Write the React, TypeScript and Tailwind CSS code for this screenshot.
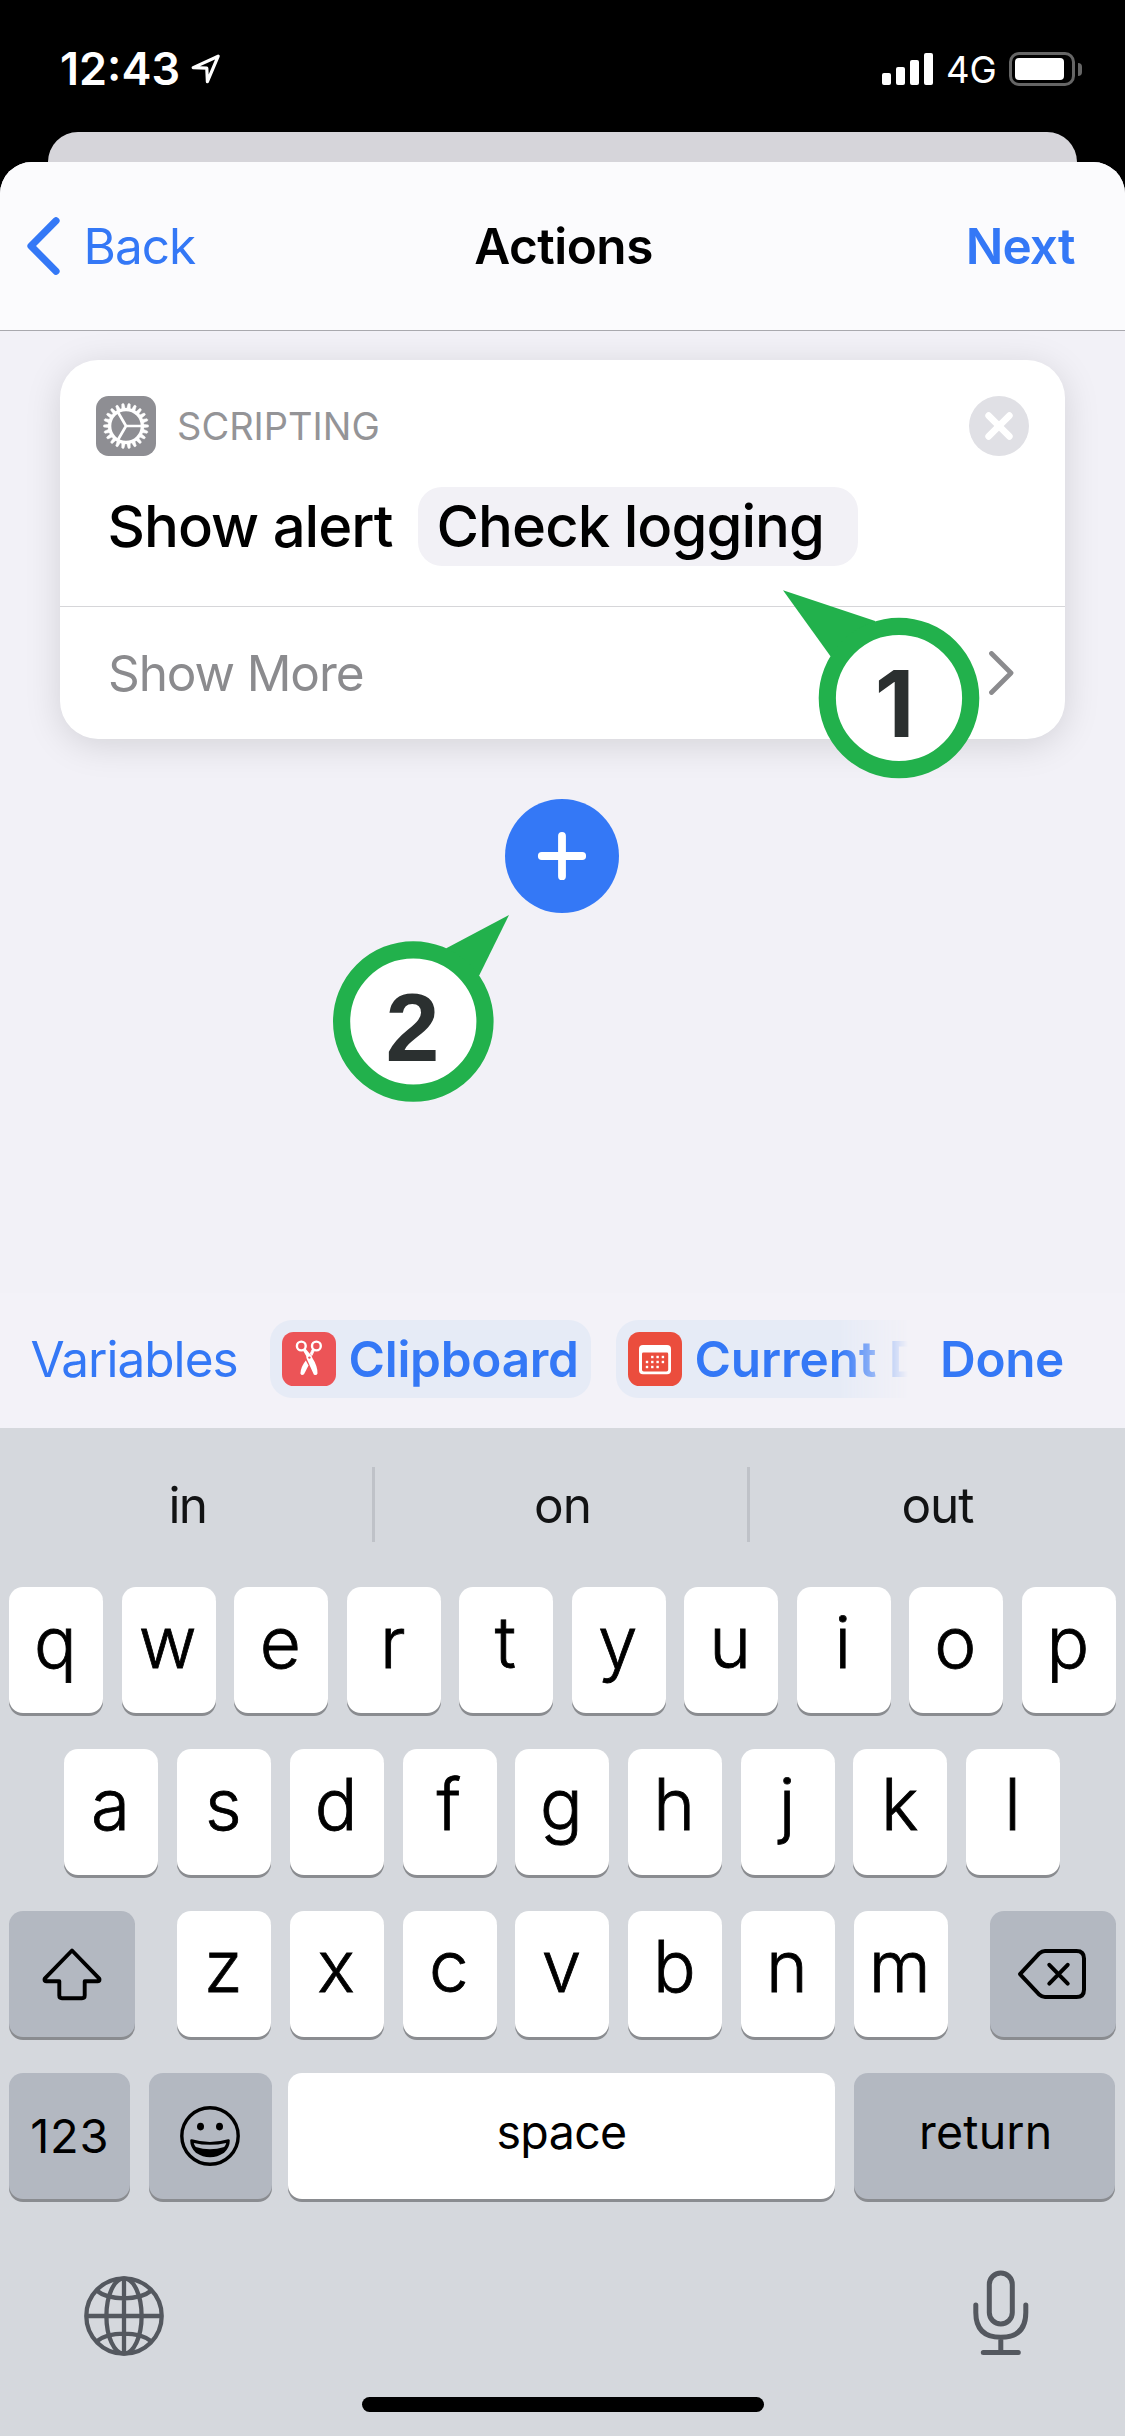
import React from "react";

function StatusBar() {
  return (
    <div className="flex h-[132px] items-center justify-between pb-0 pt-[6px] text-white">
      <div className="flex items-center pl-[60px]">
        <span className="text-[45px] font-semibold leading-[54px]">12:43</span>
        <svg className="ml-[10px] h-[32px] w-[32px]" viewBox="0 0 32 32" fill="none">
          <path d="M28.2 3.2 3.2 14.6 16.8 15.2 17.4 28.6Z" stroke="#fff" strokeWidth="3.2" strokeLinejoin="round" />
        </svg>
      </div>
      <div className="flex items-center pr-[43px]">
        <div className="flex h-[32px] items-end gap-[5px]">
          <div className="h-[12px] w-[9px] rounded-[2px] bg-white" />
          <div className="h-[18px] w-[9px] rounded-[2px] bg-white" />
          <div className="h-[25px] w-[9px] rounded-[2px] bg-white" />
          <div className="h-[32px] w-[9px] rounded-[2px] bg-white" />
        </div>
        <span className="ml-[13px] w-[63px] pt-[2px] text-[36.5px] leading-[42px]">4G</span>
        <div className="flex h-[34px] w-[66px] items-center rounded-[10px] border-3 border-[#666] pl-[3px]">
          <div className="h-[22px] w-[49px] rounded-[4px] bg-white" />
        </div>
        <div className="ml-[3px] h-[13px] w-[4px] rounded-r-full bg-[#666]" />
      </div>
    </div>
  );
}

function NavBar() {
  return (
    <div className="grid h-[169px] grid-cols-3 items-center rounded-t-[32px] border-b border-[#a9a9ae] bg-[#fbfbfd] text-[49.5px] leading-[60px]">
      <div className="flex items-center pl-[24.5px] text-[#3478f6]">
        <svg className="h-[58px] w-[36px]" viewBox="0 0 36 58" fill="none">
          <path d="M31 3.8 6 29 31 54.2" stroke="#3478f6" strokeWidth="7.2" strokeLinecap="round" strokeLinejoin="round" />
        </svg>
        <span className="ml-[23px] tracking-[-1px]">Back</span>
      </div>
      <div className="pl-[2px] text-center font-semibold tracking-[-0.5px]">Actions</div>
      <div className="pr-[50.5px] text-right font-semibold tracking-[-0.9px] text-[#3478f6]">Next</div>
    </div>
  );
}

const TEETH = Array.from({ length: 22 }, (_, i) => (i * 360) / 22);

function GearIcon() {
  return (
    <svg className="h-[60px] w-[60px]" viewBox="0 0 60 60" fill="none">
      <rect width="60" height="60" rx="12.5" fill="#8e8e93" />
      {TEETH.map((a) => (
        <path key={a} d="M47 28.2 52.2 28.9Q53.2 30 52.2 31.1L47 31.8Z" fill="#fff" stroke="#fff" strokeWidth="0.5" transform={`rotate(${a} 30 30)`} />
      ))}
      <circle cx="30" cy="30" r="16.4" stroke="#fff" strokeWidth="3.4" />
      <path d="M30 30H46M30 30 22 16.2M30 30 22 43.8" stroke="#fff" strokeWidth="2.7" />
    </svg>
  );
}

function ActionCard() {
  return (
    <div className="mx-[60px] mt-[29px] h-[379px] rounded-[38px] bg-white shadow-[0_6px_36px_rgba(0,0,0,0.13)]">
      <div className="flex flex-col pt-[36px]">
        <div className="flex h-[60px] items-center px-[36px]">
          <GearIcon />
          <span className="ml-[21px] flex-1 text-[38px] leading-[48px] text-[#949497]">SCRIPTING</span>
          <svg className="h-[60px] w-[60px]" viewBox="0 0 60 60" fill="none">
            <circle cx="30" cy="30" r="30" fill="#e0e0e5" />
            <path d="M19.6 19.6 40.4 40.4M40.4 19.6 19.6 40.4" stroke="#fff" strokeWidth="6.6" strokeLinecap="round" />
          </svg>
        </div>
        <div className="mt-[31px] flex h-[79px] items-center pl-[47.5px] text-[58px] font-medium leading-[79px] text-black">
          <span className="w-[310px] whitespace-nowrap tracking-[-0.97px]">Show alert</span>
          <span className="w-[440px] whitespace-nowrap rounded-[24px] bg-[#f2f1f6] pl-[19px] tracking-[-0.95px]">Check logging</span>
        </div>
        <div className="mt-[40px] flex h-[133px] items-center justify-between border-t border-[#d6d6d9] pl-[48px] pr-[50px]">
          <span className="text-[49.5px] leading-[60px] tracking-[-1.1px] text-[#8b8b8e]">Show More</span>
          <svg className="h-[44px] w-[28px]" viewBox="0 0 28 44" fill="none">
            <path d="M4.5 2.5 24 22 4.5 41.5" stroke="#8b8b8e" strokeWidth="4.8" strokeLinecap="round" strokeLinejoin="round" />
          </svg>
        </div>
      </div>
    </div>
  );
}

function Callouts() {
  return (
    <>
      <div className="absolute left-[780px] top-[588px] h-[194px] w-[202px]">
        <svg className="absolute inset-0" width="202" height="194" viewBox="0 0 202 194">
          <path d="M3 2.3 95.2 33 90 80 50.3 68Z" fill="#22b14c" />
          <circle cx="119" cy="110" r="71.7" fill="#fff" stroke="#22b14c" strokeWidth="17.2" />
        </svg>
        <span className="absolute left-[39.5px] top-[61px] w-[150px] text-center text-[92px] font-bold leading-[110px] text-[#2b3030]">1</span>
      </div>
      <div className="absolute left-[330px] top-[912px] h-[194px] w-[184px]">
        <svg className="absolute inset-0" width="184" height="194" viewBox="0 0 184 194">
          <path d="M179 3 149.3 63.3 100 90 116.3 36.3Z" fill="#22b14c" />
          <circle cx="83.3" cy="109.5" r="71.7" fill="#fff" stroke="#22b14c" strokeWidth="17.2" />
        </svg>
        <span className="absolute left-[7.5px] top-[61px] w-[150px] text-center font-['Liberation_Sans',sans-serif] text-[97px] font-bold leading-[110px] text-[#2b3030]">2</span>
      </div>
    </>
  );
}

function ScissorsIcon() {
  return (
    <svg className="h-[54px] w-[54px] shrink-0" viewBox="0 0 54 54" fill="none">
      <rect width="54" height="54" rx="11.5" fill="#ec5457" />
      <circle cx="19.3" cy="14" r="4.4" stroke="#fff" strokeWidth="2.4" />
      <circle cx="34.4" cy="14" r="4.4" stroke="#fff" strokeWidth="2.4" />
      <path d="M32.8 17.4 30 23.6 28.2 21.8 30.3 17.2Z" fill="#fff" stroke="#fff" strokeWidth="0.8" />
      <path d="M23.8 28.6 26.5 33.6 22 42.2Q19.6 44 18.4 41.4Q18.6 35.4 23.8 28.6Z" fill="#fff" />
      <path d="M20.6 17.8 23.6 16.8 28.6 22.8Q30 24 30.4 26Q35.6 34 35.5 41.4Q34.4 44 31.8 42.4L25 27.5Q24.2 25.6 24.2 24Z" fill="#fff" />
      <circle cx="27.4" cy="25.6" r="1.2" fill="#ec5457" />
    </svg>
  );
}

const DOTS = [
  [24.3, 25], [29.6, 25], [34.9, 25],
  [19, 30], [24.3, 30], [29.6, 30], [34.9, 30],
  [19, 35], [24.3, 35], [29.6, 35],
];

function CalendarIcon() {
  return (
    <svg className="h-[54px] w-[54px] shrink-0" viewBox="0 0 54 54" fill="none">
      <rect width="54" height="54" rx="11.5" fill="#eb4d3d" />
      <rect x="11" y="13" width="32" height="29.3" rx="4" fill="#fff" />
      <path d="M14 22Q14 20.6 15.4 20.6H38.8Q40.2 20.6 40.2 22V37.8Q40.2 39.6 38.4 39.6H15.8Q14 39.6 14 37.8Z" fill="#eb4d3d" />
      {DOTS.map(([x, y]) => (
        <rect key={`${x}-${y}`} x={x - 1.2} y={y - 1.2} width="2.4" height="2.4" fill="#fff" />
      ))}
    </svg>
  );
}

function VariableBar() {
  return (
    <div className="flex h-[135px] items-center bg-[#f3f2f8] pb-[3px] text-[49.5px] leading-[60px] text-[#3478f6]">
      <span className="w-[270px] pl-[30.5px] tracking-[-0.97px]">Variables</span>
      <div className="flex w-[650px] gap-[25px] whitespace-nowrap font-semibold [mask-image:linear-gradient(to_right,black_570px,transparent_638px)]">
        <div className="flex h-[78px] w-[321px] shrink-0 items-center rounded-[22px] bg-[#e6ebf6] pl-[12px]">
          <ScissorsIcon />
          <span className="ml-[12.5px] tracking-[-0.27px]">Clipboard</span>
        </div>
        <div className="flex h-[78px] w-[304px] shrink-0 items-center rounded-l-[22px] bg-[#e6ebf6] pl-[12px]">
          <CalendarIcon />
          <span className="ml-[12.5px] tracking-[-0.1px]">Current D</span>
        </div>
      </div>
      <span className="ml-[20px] font-semibold tracking-[-0.35px]">Done</span>
    </div>
  );
}

function Letter({ c }: { c: string }) {
  return (
    <div className="flex h-[126px] w-[94px] items-center justify-center rounded-[14px] bg-white pb-[16px] pr-[1.5px] text-[71px] font-light leading-[80px] text-black shadow-[0_3px_0_#8a8c90] [-webkit-text-stroke:0.8px_black]">
      {c}
    </div>
  );
}

function ShiftIcon() {
  return (
    <svg className="h-[54px] w-[62px]" viewBox="0 0 62 54" fill="none">
      <path d="M31 3.5 58.3 31.6Q59 34.3 57 34.3H43.7V48.5Q43.7 51.2 41 51.2H21Q18.3 51.2 18.3 48.5V34.3H5Q3 34.3 3.7 31.6Z" stroke="#000" strokeWidth="3.9" strokeLinejoin="round" />
    </svg>
  );
}

function BackspaceIcon() {
  return (
    <svg className="h-[52px] w-[70px]" viewBox="0 0 70 52" fill="none">
      <path d="M3 26.2 22.5 5.2Q25 3 28 3H59.5Q67 3 67 10.5V41.5Q67 49 59.5 49H28Q25 49 22.5 46.8Z" stroke="#000" strokeWidth="4" strokeLinejoin="round" />
      <path d="M32.3 16.8 50.7 35.6M50.7 16.8 32.3 35.6" stroke="#000" strokeWidth="4" strokeLinecap="round" />
    </svg>
  );
}

function EmojiIcon() {
  return (
    <svg className="h-[60px] w-[60px]" viewBox="0 0 60 60" fill="none">
      <circle cx="30" cy="30" r="28.2" stroke="#000" strokeWidth="3.4" />
      <ellipse cx="20.5" cy="20.6" rx="3.5" ry="3.8" fill="#000" />
      <ellipse cx="39.5" cy="20.6" rx="3.5" ry="3.8" fill="#000" />
      <path d="M11.5 34.5Q30 40 48.5 34.5Q48.5 41 43 46Q37 50 30 50Q23 50 17 46Q11.5 41 11.5 34.5Z" fill="#000" stroke="#000" strokeWidth="2.6" strokeLinejoin="round" />
      <path d="M13.8 36.9Q30 40.8 46.2 36.9Q45.8 39.2 44.2 41Q30 45.6 15.8 41Q14.2 39.2 13.8 36.9Z" fill="#b3b8c1" />
    </svg>
  );
}

function GlobeIcon() {
  return (
    <svg className="h-[80px] w-[80px]" viewBox="0 0 80 80" fill="none" stroke="#54585f" strokeWidth="4.3">
      <circle cx="40" cy="40" r="37.7" />
      <ellipse cx="40" cy="40" rx="17.6" ry="37.7" />
      <path d="M40 2.5V77.5M2.5 40H77.5M12.5 14.5Q22 22.3 40 22.3Q58 22.3 67.5 14.5M12.5 65.5Q22 57.7 40 57.7Q58 57.7 67.5 65.5" />
    </svg>
  );
}

function MicIcon() {
  return (
    <svg className="h-[86px] w-[58px]" viewBox="0 0 58 86" fill="none" stroke="#54585f" strokeWidth="5" strokeLinecap="round">
      <rect x="17.3" y="3" width="23" height="51" rx="11.5" />
      <path d="M3.8 35V42.5Q3.8 67.3 28.8 67.3Q53.8 67.3 53.8 42.5V35M28.8 67.3V82M11.3 82.5H46.3" />
    </svg>
  );
}

const DARK_KEY = "flex h-[126px] items-center justify-center rounded-[14px] bg-[#b3b8c1] text-black shadow-[0_3px_0_#8a8c90]";

function Keyboard() {
  return (
    <div className="h-[1008px] bg-[#d5d8dd]">
      <div className="flex h-[153px] items-center text-[49.5px] leading-[60px] text-[#121314]">
        <span className="w-[372px] pl-[3px] text-center tracking-[-1.5px]">in</span>
        <div className="h-[75px] w-[3px] bg-[#bfc2c8]" />
        <span className="w-[372px] pl-[3px] text-center tracking-[-1px]">on</span>
        <div className="h-[75px] w-[3px] bg-[#bfc2c8]" />
        <span className="w-[375px] text-center tracking-[-1px]">out</span>
      </div>
      <div className="mt-[6px] flex flex-col gap-[36px] pl-[9px] pr-[9.5px]">
        <div className="flex justify-between">
          {"qwertyuiop".split("").map((c) => <Letter key={c} c={c} />)}
        </div>
        <div className="flex justify-between px-[55.3px]">
          {"asdfghjkl".split("").map((c) => <Letter key={c} c={c} />)}
        </div>
        <div className="flex justify-between">
          <div className={`${DARK_KEY} w-[126px]`}><ShiftIcon /></div>
          <div className="flex w-[770.5px] justify-between">
            {"zxcvbnm".split("").map((c) => <Letter key={c} c={c} />)}
          </div>
          <div className={`${DARK_KEY} w-[126px] pr-[1px]`}><BackspaceIcon /></div>
        </div>
        <div className="flex">
          <div className={`${DARK_KEY} w-[120.5px] pl-[1px] text-[47px] leading-[56px] tracking-[0.76px]`}>123</div>
          <div className={`${DARK_KEY} ml-[19px] w-[123px]`}><EmojiIcon /></div>
          <div className="ml-[16.5px] flex h-[126px] w-[547px] items-center justify-center rounded-[14px] bg-white pb-[8px] text-[46.5px] leading-[56px] tracking-[-0.64px] text-black shadow-[0_3px_0_#8a8c90]">space</div>
          <div className={`${DARK_KEY} ml-[18.5px] w-[261.5px] pb-[8px] pl-[3px] text-[46.5px] leading-[56px] tracking-[0.2px]`}>return</div>
        </div>
      </div>
      <div className="flex h-[198px] items-start justify-between pl-[84px] pr-[95px] pt-[71px]">
        <div className="pt-[6px]"><GlobeIcon /></div>
        <MicIcon />
      </div>
      <div className="mx-auto h-[15px] w-[402px] rounded-full bg-black" />
    </div>
  );
}

export default function App() {
  return (
    <div className="relative h-[2436px] w-[1125px] overflow-hidden bg-black font-['Inter',sans-serif]">
      <StatusBar />
      <div className="mx-[48px] h-[30px] rounded-t-[30px] bg-[#d6d5da]" />
      <div className="bg-black">
        <div className="flex h-[1131px] flex-col rounded-t-[32px] bg-[#f2f1f7]">
          <NavBar />
          <ActionCard />
          <div className="ml-[505px] mt-[60px] flex h-[114px] w-[114px] items-center justify-center rounded-full bg-[#3478f6]">
            <svg className="h-[50px] w-[50px]" viewBox="0 0 50 50">
              <path d="M25 4.8V45.2M4.8 25H45.2" stroke="#fff" strokeWidth="7.8" strokeLinecap="round" />
            </svg>
          </div>
        </div>
      </div>
      <VariableBar />
      <Keyboard />
      <Callouts />
    </div>
  );
}
